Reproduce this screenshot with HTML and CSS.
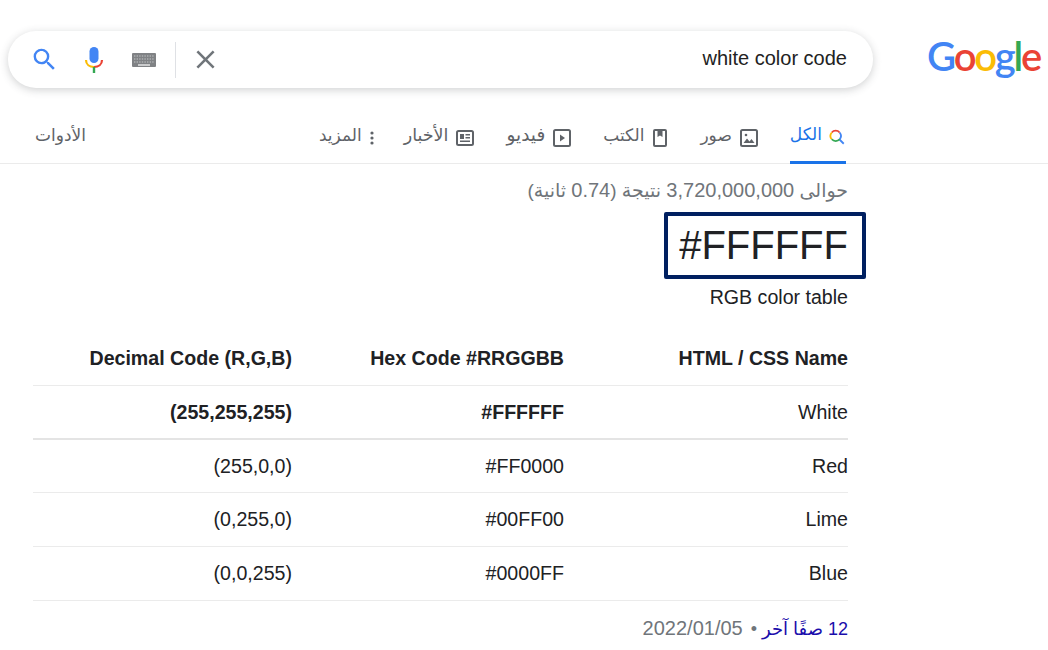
FILE: index.html
```html
<!DOCTYPE html>
<html lang="ar" dir="rtl">

<head>
    <meta charset="UTF-8">
    <title>white color code</title>
    <link rel="stylesheet" href="styles.css">
</head>

<body>
    <header class="top">
        <div class="logo" dir="ltr"><span class="g-blue">G</span><span class="g-red">o</span><span class="g-yellow">o</span><span class="g-blue">g</span><span class="g-green">l</span><span class="g-red">e</span></div>
        <div class="search">
            <div class="query" dir="ltr">white color code</div>
            <button class="clear" aria-label="مسح">
                <svg width="31" height="31" viewBox="0 0 24 24"><path fill="#70757a" d="M19 6.41 17.59 5 12 10.59 6.41 5 5 6.41 10.59 12 5 17.59 6.41 19 12 13.41 17.59 19 19 17.59 13.41 12z"/></svg>
            </button>
            <span class="divider"></span>
            <svg class="kbd" width="24" height="14" viewBox="0 0 24 14">
                <rect width="24" height="14" rx="1" fill="#808285"/>
                <path stroke="#c4c5c7" stroke-width="1.200" stroke-dasharray="1.400 1.200" d="M2 3h20M2 6h20M2 9h20"/>
                <path stroke="#e4e5e6" stroke-width="1.500" d="M6 12h12"/>
            </svg>
            <svg class="mic" width="24" height="28" viewBox="0 0 24 28">
                <rect x="7.500" y="1" width="9" height="16" rx="4.500" fill="#4285f4"/>
                <path fill="none" stroke="#ea4335" stroke-width="2.200" d="M20 14c0 4.500-3.600 7-8 7"/>
                <path fill="none" stroke="#fbbc05" stroke-width="2.200" d="M4 14c0 4.500 3.600 7 8 7"/>
                <rect x="10.800" y="21" width="2.400" height="6" fill="#34a853"/>
            </svg>
            <svg class="lens" width="29" height="29" viewBox="0 0 24 24"><path fill="#4285f4" d="M15.500 14h-.79l-.28-.27A6.470 6.470 0 0 0 16 9.500 6.500 6.500 0 1 0 9.500 16c1.610 0 3.090-.59 4.230-1.570l.27.28v.79l5 4.990L20.490 19l-4.990-5zm-6 0C7.010 14 5 11.990 5 9.500S7.010 5 9.500 5 14 7.010 14 9.500 11.990 14 9.500 14z"/></svg>
        </div>
    </header>

    <nav class="tabs">
        <a class="tab active" href="#">
            <svg width="18" height="18" viewBox="0 0 24 24">
                <path fill="none" stroke="#4285f4" stroke-width="2.400" d="M15 15l6 6"/>
                <path fill="none" stroke="#4285f4" stroke-width="2.400" d="M15.500 6a7 7 0 0 1 0 9"/>
                <path fill="none" stroke="#ea4335" stroke-width="2.400" d="M5 6a7 7 0 0 1 10.500 0"/>
                <path fill="none" stroke="#fbbc05" stroke-width="2.400" d="M5 6a7 7 0 0 0 0 9"/>
                <path fill="none" stroke="#34a853" stroke-width="2.400" d="M5 15a7 7 0 0 0 10.500 0"/>
            </svg>
            الكل
        </a>
        <a class="tab" href="#">
            <svg width="18" height="18" viewBox="0 0 18 18">
                <rect x="1" y="1" width="16" height="16" rx="1.500" fill="none" stroke="#5f6368" stroke-width="2"/>
                <path fill="#5f6368" d="M3.500 14l3.500-4.500 2.500 3 2-2.500 3 4z"/>
                <circle cx="6" cy="6" r="1.300" fill="#5f6368"/>
            </svg>
            صور
        </a>
        <a class="tab" href="#">
            <svg width="16" height="18" viewBox="0 0 16 18">
                <rect x="2" y="1" width="12" height="16" rx="1" fill="none" stroke="#5f6368" stroke-width="2"/>
                <path fill="#5f6368" d="M5.500 1h5v7L8 6.500 5.500 8z"/>
            </svg>
            الكتب
        </a>
        <a class="tab tab-video" href="#">
            <svg width="18" height="18" viewBox="0 0 18 18">
                <rect x="1" y="1" width="16" height="16" rx="1.500" fill="none" stroke="#5f6368" stroke-width="2"/>
                <path fill="#5f6368" d="M7 5.500l5 3.500-5 3.500z"/>
            </svg>
            فيديو
        </a>
        <a class="tab tab-news" href="#">
            <svg width="18" height="16" viewBox="0 0 18 16">
                <rect x="1" y="1" width="16" height="14" rx="1.500" fill="none" stroke="#5f6368" stroke-width="2"/>
                <path fill="#5f6368" d="M4 4h4v5H4zM9.500 4H14v1.500H9.500zM9.500 7H14v1.500H9.500zM4 10.500h10V12H4z"/>
            </svg>
            الأخبار
        </a>
        <a class="tab tab-more" href="#">
            <svg width="4" height="14" viewBox="0 0 4 14">
                <circle cx="2" cy="2" r="1.600" fill="#5f6368"/>
                <circle cx="2" cy="7" r="1.600" fill="#5f6368"/>
                <circle cx="2" cy="12" r="1.600" fill="#5f6368"/>
            </svg>
            المزيد
        </a>
        <a class="tab tools" href="#">الأدوات</a>
    </nav>

    <main class="results">
        <div class="stats">حوالى <bdi class="count">3,720,000,000</bdi> نتيجة (<bdi class="count">0.74</bdi> ثانية)</div>
        <div class="answer" dir="ltr">#FFFFFF</div>
        <div class="caption" dir="ltr">RGB color table</div>

        <table class="colors">
            <tr>
                <th class="col-name">HTML / CSS Name</th>
                <th class="col-hex">Hex Code #RRGGBB</th>
                <th>Decimal Code (R,G,B)</th>
            </tr>
            <tr class="hit">
                <td>White</td>
                <td class="strong"><bdi dir="ltr">#FFFFFF</bdi></td>
                <td class="strong"><bdi dir="ltr">(255,255,255)</bdi></td>
            </tr>
            <tr>
                <td>Red</td>
                <td><bdi dir="ltr">#FF0000</bdi></td>
                <td><bdi dir="ltr">(255,0,0)</bdi></td>
            </tr>
            <tr>
                <td>Lime</td>
                <td><bdi dir="ltr">#00FF00</bdi></td>
                <td><bdi dir="ltr">(0,255,0)</bdi></td>
            </tr>
            <tr>
                <td>Blue</td>
                <td><bdi dir="ltr">#0000FF</bdi></td>
                <td><bdi dir="ltr">(0,0,255)</bdi></td>
            </tr>
        </table>

        <div class="more-rows"><a href="#">12 صفًا آخر</a> • <bdi class="date">2022/01/05</bdi></div>
    </main>
</body>

</html>
```

FILE: styles.css
```css
body {
    font-family: "Liberation Sans", "DejaVu Sans", sans-serif;
    margin: 0;
    padding: 0;
    background-color: #fff;
    color: #202124;
    overflow: hidden;
}

a {
    text-decoration: none;
    color: inherit;
}

/* BARRA SUPERIOR */
.top {
    display: flex;
    align-items: center;
    padding-top: 31px;
    height: 57px;
}

.logo {
    width: 175px;
    box-sizing: border-box;
    padding-left: 54px;
    padding-bottom: 6px;
    font-family: "Lato", sans-serif;
    font-size: 40px;
    font-weight: 600;
    letter-spacing: -2.200px;
    line-height: 51px;
    text-align: left;
}

.g-blue {
    color: #4285f4;
}

.g-red {
    color: #ea4335;
}

.g-yellow {
    color: #fbbc05;
}

.g-green {
    color: #34a853;
}

.search {
    display: flex;
    align-items: center;
    width: 865px;
    height: 57px;
    box-sizing: border-box;
    padding: 0 26px 0 22px;
    border-radius: 28px;
    background: #fff;
    box-shadow: 0 2px 8px rgba(60, 64, 67, 0.24);
}

.query {
    flex: 1;
    padding-bottom: 2px;
    font-size: 20px;
    text-align: right;
    color: #222;
}

.clear {
    display: flex;
    padding: 0;
    margin-left: 14px;
    border: none;
    background: none;
}

.divider {
    width: 1px;
    height: 36px;
    margin-left: 19px;
    background: #dfe1e5;
}

.kbd {
    margin-left: 26px;
}

.mic {
    margin-left: 23px;
}

/* ABAS */
.tabs {
    display: flex;
    gap: 32px;
    height: 53px;
    margin-top: 22px;
    padding: 0 202px 0 35px;
    border-bottom: 1px solid #ebebeb;
}

.tab {
    display: flex;
    align-items: center;
    gap: 8px;
    height: 53px;
    box-sizing: border-box;
    padding-bottom: 3px;
    font-size: 17px;
    color: #5f6368;
}

.tab svg {
    margin-top: 6px;
}

.tab.active {
    gap: 6px;
    color: #1a73e8;
    border-bottom: 3px solid #1a73e8;
    height: 54px;
}

.tab-video {
    font-size: 18.500px;
}

.tab-news {
    font-size: 17.500px;
}

.tab-more {
    margin-right: -2px;
}

.tools {
    margin-right: auto;
}

/* RESULTADOS */
.results {
    width: 815px;
    margin-right: 200px;
}

.stats {
    margin-top: 15px;
    font-size: 19px;
    line-height: 22px;
    color: #70757a;
}

.count {
    font-size: 20px;
}

.answer {
    width: fit-content;
    box-sizing: border-box;
    margin-top: 10px;
    margin-right: -18px;
    padding: 0 14px 0 11px;
    height: 67px;
    border: 4px solid #002060;
    border-radius: 2px;
    font-size: 40px;
    line-height: 59px;
    color: #202124;
}

.caption {
    margin-top: 7px;
    font-size: 19.600px;
    line-height: 22px;
    text-align: right;
}

.colors {
    width: 815px;
    margin-top: 24px;
    border-collapse: collapse;
    table-layout: fixed;
    font-size: 19.600px;
}

.colors th,
.colors td {
    height: 53px;
    padding: 0;
    text-align: right;
    border-bottom: 1px solid #ebebeb;
}

.colors th {
    font-weight: bold;
}

.col-name {
    width: 284px;
}

.col-hex {
    width: 272px;
}

.colors .hit td {
    height: 52px;
    border-bottom: 2px solid #e4e4e4;
}

.colors .hit + tr td {
    height: 52px;
}

.strong {
    font-weight: bold;
}

.more-rows {
    margin-top: 16px;
    font-size: 18px;
    line-height: 22px;
    color: #70757a;
}

.more-rows a {
    color: #1a0dab;
}

.date {
    margin-right: 3px;
    font-size: 20px;
}
```
